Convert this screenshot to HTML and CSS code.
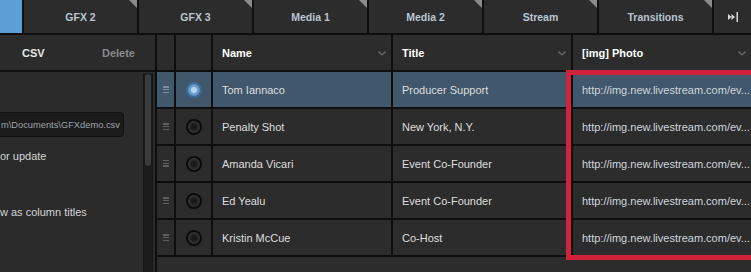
FILE: index.html
```html
<!DOCTYPE html>
<html lang="en">
  <head>
    <meta charset="UTF-8" />
    <title>GFX Data</title>
    <link rel="stylesheet" href="styles.css">
  </head>
  <body>
    <div class="tabs">
      <div class="tab tab-active"></div>
      <div class="tab">GFX 2</div>
      <div class="tab">GFX 3</div>
      <div class="tab">Media 1</div>
      <div class="tab">Media 2</div>
      <div class="tab">Stream</div>
      <div class="tab">Transitions</div>
      <div class="tab tab-end">
        <svg width="12" height="12" viewBox="0 0 12 12">
          <polygon points="1,3 4.5,6 1,9" fill="#d8d8d8" />
          <polygon points="4.5,3 8,6 4.5,9" fill="#d8d8d8" />
          <rect x="9.5" y="1" width="1.5" height="10" fill="#d8d8d8" />
        </svg>
      </div>
    </div>

    <div class="main">
      <div class="side">
        <div class="side-head">
          <span class="side-csv">CSV</span>
          <span class="side-delete">Delete</span>
        </div>
        <div class="side-body">
          <div class="side-content">
            <div class="field">m\Documents\GFXdemo.csv</div>
            <div class="opt opt-first">or update</div>
            <div class="opt opt-second">w as column titles</div>
          </div>
          <div class="scroll"><div class="thumb"></div></div>
        </div>
      </div>

      <div class="grid">
        <div class="cell"></div>
        <div class="cell"></div>
        <div class="cell head">Name <svg class="chev" width="8" height="5" viewBox="0 0 8 5"><polyline points="0.5,0.5 4,4 7.5,0.5" fill="none" stroke="#6f6f6f" stroke-width="1.2" /></svg></div>
        <div class="cell head">Title <svg class="chev" width="8" height="5" viewBox="0 0 8 5"><polyline points="0.5,0.5 4,4 7.5,0.5" fill="none" stroke="#6f6f6f" stroke-width="1.2" /></svg></div>
        <div class="cell head">[img] Photo <svg class="chev" width="8" height="5" viewBox="0 0 8 5"><polyline points="0.5,0.5 4,4 7.5,0.5" fill="none" stroke="#6f6f6f" stroke-width="1.2" /></svg></div>

        <div class="cell sel handle"><span class="grip"></span></div>
        <div class="cell sel radio-cell"><span class="radio radio-on"></span></div>
        <div class="cell sel">Tom Iannaco</div>
        <div class="cell sel">Producer Support</div>
        <div class="cell sel url">http://img.new.livestream.com/ev...</div>

        <div class="cell handle"><span class="grip"></span></div>
        <div class="cell radio-cell"><span class="radio"></span></div>
        <div class="cell">Penalty Shot</div>
        <div class="cell">New York, N.Y.</div>
        <div class="cell url">http://img.new.livestream.com/ev...</div>

        <div class="cell handle"><span class="grip"></span></div>
        <div class="cell radio-cell"><span class="radio"></span></div>
        <div class="cell">Amanda Vicari</div>
        <div class="cell">Event Co-Founder</div>
        <div class="cell url">http://img.new.livestream.com/ev...</div>

        <div class="cell handle"><span class="grip"></span></div>
        <div class="cell radio-cell"><span class="radio"></span></div>
        <div class="cell">Ed Yealu</div>
        <div class="cell">Event Co-Founder</div>
        <div class="cell url">http://img.new.livestream.com/ev...</div>

        <div class="cell handle"><span class="grip"></span></div>
        <div class="cell radio-cell"><span class="radio"></span></div>
        <div class="cell">Kristin McCue</div>
        <div class="cell">Co-Host</div>
        <div class="cell url">http://img.new.livestream.com/ev...</div>

        <div class="cell empty"></div>
      </div>

      <div class="highlight"></div>
    </div>
  </body>
</html>
```

FILE: styles.css
```css
body {
  margin: 0;
  background: #0e0e0e;
  font-family: "Liberation Sans", Arial, sans-serif;
  font-size: 11px;
  color: #dedede;
  overflow: hidden;
}
.tabs {
  display: flex;
  gap: 2px;
  height: 33px;
  padding-bottom: 2px;
  background: #0e0e0e;
}
.tab {
  position: relative;
  width: 113px;
  flex: none;
  display: flex;
  align-items: center;
  justify-content: center;
  background: #2c2c2c;
  color: #b9c5d2;
  font-weight: bold;
  font-size: 10.5px;
}
.tab::after {
  content: "";
  position: absolute;
  top: 0;
  right: 0;
  border-top: 8px solid #8a8a8a;
  border-left: 8px solid transparent;
}
.tab-active {
  width: 22px;
  background: #5b9fd6;
}
.tab-active::after,
.tab-end::after {
  display: none;
}
.tab-end {
  flex: 1;
  width: auto;
  justify-content: flex-start;
  padding-left: 13px;
}
.main {
  position: relative;
  display: flex;
  gap: 2px;
  height: 237px;
  overflow: hidden;
}
.side {
  width: 155px;
  flex: none;
  display: flex;
  flex-direction: column;
  gap: 2px;
}
.side-head {
  height: 35px;
  flex: none;
  display: flex;
  align-items: center;
  justify-content: space-between;
  padding: 0 20px 0 22px;
  background: #2b2b2b;
  font-weight: bold;
}
.side-csv {
  color: #e8e8e8;
}
.side-delete {
  color: #8a8a8a;
}
.side-body {
  flex: 1;
  display: flex;
  background: #2b2b2b;
  overflow: hidden;
}
.side-content {
  flex: 1;
  overflow: hidden;
}
.field {
  margin: 40px 0 0 -6px;
  width: 130px;
  height: 25px;
  box-sizing: border-box;
  display: flex;
  align-items: center;
  padding-left: 6px;
  background: #1b1b1b;
  border: 1px solid #111;
  border-radius: 4px;
  color: #9ea4aa;
  font-size: 9.3px;
  white-space: nowrap;
}
.opt {
  line-height: 14px;
  color: #d4d4d4;
  white-space: nowrap;
}
.opt-first {
  margin-top: 12px;
}
.opt-second {
  margin-top: 42px;
}
.scroll {
  width: 10px;
  margin: 1px 2px 0 0;
  display: flex;
  flex-direction: column;
  background: #1c1c1c;
  border-left: 1px solid #151515;
  border-right: 1px solid #151515;
  box-sizing: border-box;
}
.thumb {
  height: 92px;
  background: #3b3b3b;
  border: 1px solid #1a1a1a;
  border-radius: 5px;
}
.grid {
  flex: 1;
  display: grid;
  grid-template-columns: 17px 35px 178px 178px 1fr;
  grid-template-rows: repeat(6, 35px) 1fr;
  gap: 2px;
}
.cell {
  background: #2c2c2c;
  display: flex;
  align-items: center;
  padding-left: 9px;
  white-space: nowrap;
  overflow: hidden;
  color: #dedede;
}
.head {
  color: #ffffff;
  font-weight: bold;
  justify-content: space-between;
  padding-right: 5px;
}
.head .chev {
  margin-top: 1px;
}
.sel {
  background: #41576b;
}
.url {
  color: #d0d6dc;
}
.handle,
.radio-cell {
  padding-left: 0;
  justify-content: center;
}
.grip {
  width: 6px;
  height: 7px;
  background: linear-gradient(#5e5e5e 0 1.5px, transparent 1.5px 2.75px, #5e5e5e 2.75px 4.25px, transparent 4.25px 5.5px, #5e5e5e 5.5px);
}
.sel .grip {
  background: linear-gradient(#7b8c9b 0 1.5px, transparent 1.5px 2.75px, #7b8c9b 2.75px 4.25px, transparent 4.25px 5.5px, #7b8c9b 5.5px);
}
.radio {
  width: 12px;
  height: 12px;
  border-radius: 50%;
  border: 2px solid #0b0b0b;
  background: radial-gradient(circle, #1a1a1a 0 2.5px, #232323 3.5px, #383838 6px);
}
.radio-on {
  border-color: #3d6a95;
  background: radial-gradient(circle, #b8d4ee 0 2.5px, #6fa3d2 3.5px, #5a90c2 6px);
}
.empty {
  grid-column: 1 / -1;
}
.highlight {
  position: absolute;
  left: 566px;
  top: 35px;
  width: 210px;
  height: 190px;
  box-sizing: border-box;
  border: 5px solid #d0223b;
}
```
